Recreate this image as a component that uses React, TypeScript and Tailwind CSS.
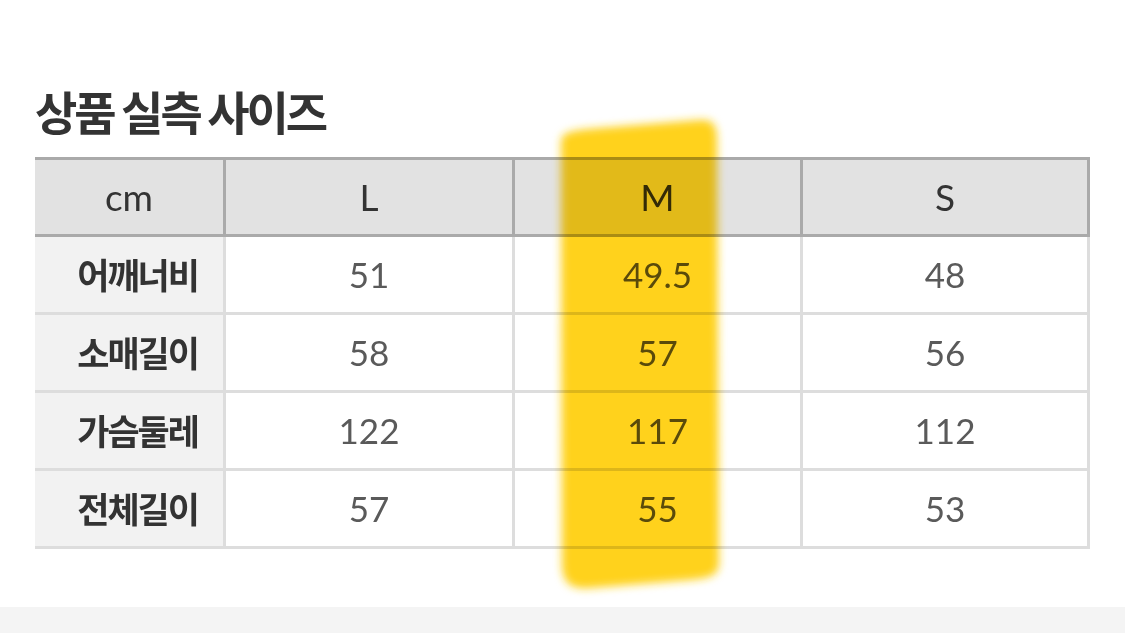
import React from 'react';

const sizes = ['L', 'M', 'S'];

const rows: { label: string; values: string[] }[] = [
  { label: '어깨너비', values: ['51', '49.5', '48'] },
  { label: '소매길이', values: ['58', '57', '56'] },
  { label: '가슴둘레', values: ['122', '117', '112'] },
  { label: '전체길이', values: ['57', '55', '53'] },
];

const cols = 'grid grid-cols-[191px_289px_288px_287px]';

function Highlighter() {
  // marker stroke drawn over the M column
  return (
    <svg
      className="pointer-events-none absolute left-[540px] top-[100px] mix-blend-multiply"
      width="200"
      height="510"
      viewBox="0 0 200 510"
    >
      <defs>
        <filter id="soft" x="-20%" y="-20%" width="140%" height="140%">
          <feGaussianBlur stdDeviation="4.5" />
        </filter>
      </defs>
      <path
        d="M21 42 C21 30 40 30 60 28 L160 20 C174 19 177 26 177 40 L179 462 C179 476 170 478 150 480 L50 488 C28 490 23 480 22 466 Z"
        fill="#ffd21a"
        filter="url(#soft)"
      />
    </svg>
  );
}

export default function App() {
  return (
    <div className="flex h-[633px] w-[1125px] flex-col bg-white font-['Lato','Noto_Sans_CJK_KR',sans-serif]">
      <div className="relative flex-1 pl-[35px] pt-[88px]">
        <h2 className="mb-[25px] whitespace-pre font-['Noto_Sans_CJK_KR',sans-serif] text-[46px] font-bold leading-[44px] tracking-[-3px] text-[#333]">
          상품 실측 사이즈
        </h2>

        <div className="w-[1055px]">
          <div className={`${cols} h-[80px] border-y-[3px] border-[#aaa] bg-[#e2e2e2]`}>
            <div className="flex items-center justify-center border-r-[3px] border-[#aaa] text-[37px] text-[#333]">cm</div>
            {sizes.map((s) => (
              <div key={s} className="flex items-center justify-center border-r-[3px] border-[#aaa] text-[37px] text-[#333]">
                {s}
              </div>
            ))}
          </div>

          {rows.map((r) => (
            <div key={r.label} className={`${cols} h-[78px] border-b-[3px] border-[#ddd]`}>
              <div className="flex items-center justify-end border-r-[3px] border-[#ddd] bg-[#f2f2f2] pr-[25px] font-['Noto_Sans_CJK_KR',sans-serif] text-[35px] font-bold tracking-[-2px] text-[#333]">
                {r.label}
              </div>
              {r.values.map((v, i) => (
                <div key={i} className="flex items-center justify-center border-r-[3px] border-[#ddd] text-[35px] text-[#5a5a5a]">
                  {v}
                </div>
              ))}
            </div>
          ))}
        </div>

        <Highlighter />
      </div>
      <div className="h-[26px] bg-[#f4f4f4]" />
    </div>
  );
}
